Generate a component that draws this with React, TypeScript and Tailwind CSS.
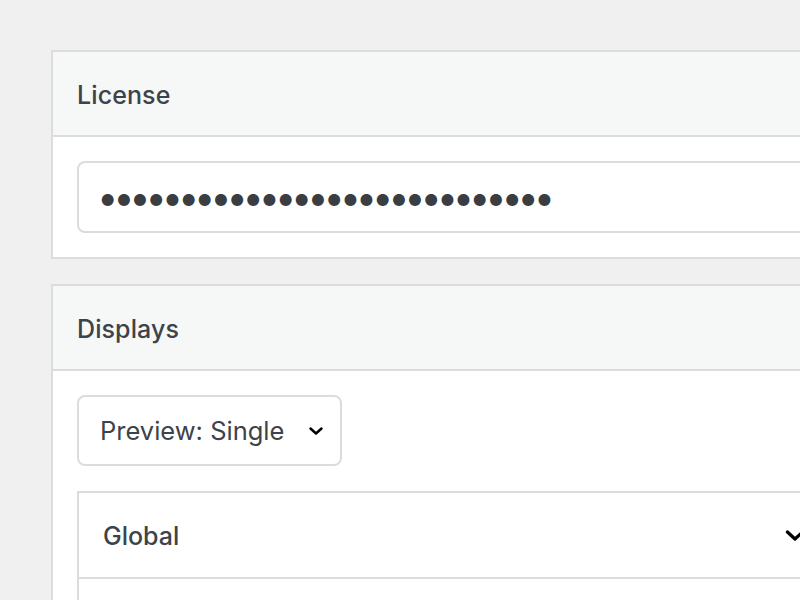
import React from "react";

function Chevron({ className }: { className?: string }) {
  return (
    <svg viewBox="0 0 14 8" fill="none" className={className}>
      <path d="M1.5 1.5 7 6.5l5.5-5" stroke="currentColor" strokeWidth="2.4" strokeLinecap="round" strokeLinejoin="round" />
    </svg>
  );
}

function Card({ title, children }: { title: string; children: React.ReactNode }) {
  return (
    <div className="border-2 border-[#dcdcde] bg-white">
      <div className="h-[85px] flex items-center px-[24px] pt-[5px] bg-[#f6f7f7] border-b-2 border-[#dcdcde]">
        <h2 className="text-[25px] font-medium text-[#3c434a] tracking-[0.1px]">{title}</h2>
      </div>
      <div className="p-[24px]">{children}</div>
    </div>
  );
}

export default function App() {
  return (
    <div
      className="w-[800px] h-[600px] overflow-hidden bg-[#f0f0f1]"
      style={{ fontFamily: "Inter, 'Noto Sans', sans-serif" }}
    >
      <div className="w-[900px] ml-[51px] pt-[50px] flex flex-col gap-[25px]">
        <Card title="License">
          <input
            type="password"
            readOnly
            value="abcdefghijklmnopqrstuvwxyz12"
            className="w-[900px] h-[72px] pl-[18px] pr-[22px] rounded-[8px] border-2 border-[#dcdcde] bg-white text-[#3a3d42] text-[38px] tracking-[-5.2px] outline-none"
          />
        </Card>
        <Card title="Displays">
          <div className="flex flex-col gap-[25px]">
            <div className="w-[265px] h-[71px] flex items-center justify-between pl-[21px] pr-[17px] rounded-[8px] border-2 border-[#dcdcde] bg-white">
              <span className="text-[25.5px] text-[#3c434a] pt-[2px]">Preview: Single</span>
              <Chevron className="w-[14px] h-[8px] text-black" />
            </div>
            <div className="border-2 border-[#dcdcde]">
              <div className="h-[86px] flex items-center justify-between pl-[24px] pr-[14px] border-b-2 border-[#dcdcde] w-[740px]">
                <span className="text-[25px] font-medium text-[#3c434a] pt-[4px]">Global</span>
                <Chevron className="w-[20px] h-[11px] text-black" />
              </div>
              <div className="h-[80px]" />
            </div>
          </div>
        </Card>
      </div>
    </div>
  );
}
